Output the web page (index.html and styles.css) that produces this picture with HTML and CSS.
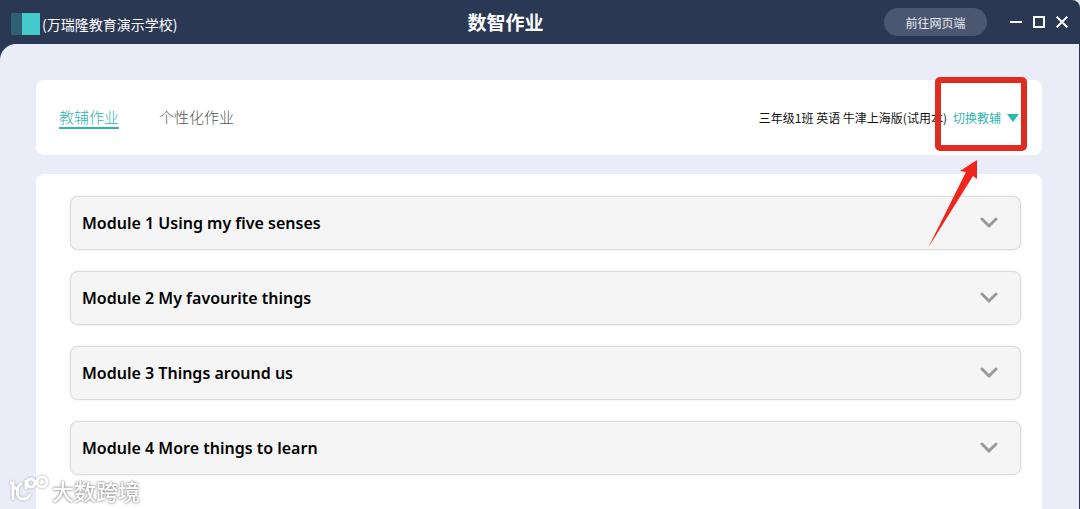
FILE: index.html
```html
<!DOCTYPE html>
<html lang="zh-CN">

<head>
    <meta charset="UTF-8">
    <meta name="viewport" content="width=device-width, initial-scale=1.0">
    <title>数智作业</title>
    <link rel="stylesheet" href="styles.css">
</head>

<body>
    <div class="window">
        <header class="titlebar">
            <div class="school">
                <svg class="logo" width="29" height="22" viewBox="0 0 29 22">
                    <rect width="12" height="22" fill="#2d6173" />
                    <rect x="11" width="18" height="22" fill="#45cacc" />
                </svg>
                <span>(万瑞隆教育演示学校)</span>
            </div>
            <h1>数智作业</h1>
            <div class="controls">
                <button class="webbtn">前往网页端</button>
                <button class="winbtn" aria-label="最小化">
                    <svg width="12" height="12" viewBox="0 0 12 12"><path d="M0 6H12" /></svg>
                </button>
                <button class="winbtn" aria-label="最大化">
                    <svg width="12" height="12" viewBox="0 0 12 12"><path d="M1 1H11V11H1Z" /></svg>
                </button>
                <button class="winbtn" aria-label="关闭">
                    <svg width="12" height="12" viewBox="0 0 12 12"><path d="M.7 .7L11.3 11.3M11.3 .7L.7 11.3" /></svg>
                </button>
            </div>
        </header>

        <main class="content">
            <div class="card toolbar">
                <nav class="tabs">
                    <a href="#" class="active">教辅作业</a>
                    <a href="#">个性化作业</a>
                </nav>
                <div class="book">
                    <span>三年级1班 英语 牛津上海版(试用本)</span>
                    <button class="switch">切换教辅
                        <svg width="12" height="8" viewBox="0 0 12 8"><path d="M0 0H12L6 8Z" fill="#2fb5b0" /></svg>
                    </button>
                </div>
                <!-- highlight box and arrow -->
                <svg class="mark" width="100" height="174" viewBox="0 0 100 174">
                    <rect x="11" y="3" width="86" height="68" rx="2" fill="none" stroke="#e02b20" stroke-width="6" />
                    <path d="M50 83L33 94L39 95L1 171L46 99L50 102Z" fill="#f0241b" />
                </svg>
            </div>

            <div class="card modules">
                <button class="module">Module 1 Using my five senses
                    <svg width="18" height="12" viewBox="0 0 18 12"><path d="M2 2L9 9L16 2" /></svg>
                </button>
                <button class="module">Module 2 My favourite things
                    <svg width="18" height="12" viewBox="0 0 18 12"><path d="M2 2L9 9L16 2" /></svg>
                </button>
                <button class="module">Module 3 Things around us
                    <svg width="18" height="12" viewBox="0 0 18 12"><path d="M2 2L9 9L16 2" /></svg>
                </button>
                <button class="module">Module 4 More things to learn
                    <svg width="18" height="12" viewBox="0 0 18 12"><path d="M2 2L9 9L16 2" /></svg>
                </button>
            </div>
        </main>
    </div>

    <div class="watermark">
        <svg width="42" height="30" viewBox="0 0 42 30">
            <path d="M2 8H5V25M5 15L8 12M14 8C8 11 7 24 15 24C19 24 21 22 22 19" />
            <path d="M18 5V14" />
            <circle cx="23" cy="8" r="4" />
            <circle cx="34" cy="7" r="5" />
        </svg>
        <span>大数跨境</span>
    </div>
</body>

</html>
```
FILE: styles.css
```css
* {
    box-sizing: border-box;
}

html {
    height: 100%;
    overflow: hidden;
    background-color: #e4e8ee;
}

body {
    margin: 0;
    height: 100%;
    font-family: "Noto Sans CJK SC", sans-serif;
}

button {
    font-family: inherit;
    border: none;
    background: none;
    padding: 0;
    cursor: pointer;
}

.window {
    display: flex;
    flex-direction: column;
    min-height: 100%;
    background-color: #2b3854;
    border-top-right-radius: 8px;
    padding-right: 1px;
}

.titlebar {
    display: grid;
    grid-template-columns: 1fr auto 1fr;
    align-items: center;
    height: 44px;
    padding: 0 11px;
    color: white;
}

.titlebar h1 {
    margin: 0;
    font-size: 19px;
    line-height: 44px;
    padding-right: 68px;
}

.school {
    display: flex;
    align-items: center;
    gap: 2px;
    font-size: 14px;
    padding-top: 4px;
}

.controls {
    display: flex;
    align-items: center;
    justify-content: flex-end;
    gap: 11px;
}

.webbtn {
    width: 103px;
    height: 28px;
    border-radius: 14px;
    background-color: #4b5670;
    color: #e9edf5;
    font-size: 12px;
    margin-right: 12px;
}

.winbtn {
    display: flex;
}

.winbtn path {
    fill: none;
    stroke: white;
    stroke-width: 2;
}

.content {
    flex: 1;
    display: flex;
    flex-direction: column;
    gap: 19px;
    padding: 36px 37px 0 36px;
    background-color: #eaecf8;
    border-top-left-radius: 16px;
}

.card {
    background-color: white;
    border-radius: 8px;
}

.toolbar {
    position: relative;
    display: flex;
    justify-content: space-between;
    align-items: center;
    height: 75px;
    padding: 0 23px;
}

.tabs {
    display: flex;
    gap: 40px;
}

.tabs a {
    font-size: 15px;
    line-height: 20px;
    font-weight: 300;
    color: #555;
    text-decoration: none;
    border-bottom: 2px solid transparent;
}

.tabs .active {
    color: #2fb5b0;
    border-color: #2fb5b0;
}

.book {
    display: flex;
    align-items: center;
    gap: 6px;
    font-size: 12px;
    color: #111;
}

.switch {
    display: flex;
    align-items: center;
    gap: 6px;
    font-size: 12px;
    color: #2fb5b0;
}

.mark {
    position: absolute;
    top: -3px;
    right: 15px;
    pointer-events: none;
}

.modules {
    flex: 1;
    display: flex;
    flex-direction: column;
    gap: 21px;
    padding: 22px 21px 35px 34px;
    border-radius: 8px 8px 0 0;
}

.module {
    display: flex;
    align-items: center;
    justify-content: space-between;
    height: 54px;
    padding: 0 22px 0 11px;
    border: 1px solid #dcdcdc;
    border-radius: 8px;
    background-color: #f5f5f5;
    box-shadow: 0 0 2px #ddd;
    font-family: "Noto Sans", "Open Sans", sans-serif;
    font-size: 16px;
    font-weight: 600;
    color: black;
}

.module path {
    fill: none;
    stroke: #999;
    stroke-width: 3;
    stroke-linecap: round;
}

.watermark {
    position: fixed;
    left: 8px;
    bottom: 3px;
    display: flex;
    align-items: center;
    gap: 2px;
    font-size: 22px;
    font-weight: 500;
    line-height: 32px;
    color: white;
    text-shadow: 0 0 2px #888, 0 0 3px #999;
}

.watermark svg {
    fill: none;
    stroke: white;
    stroke-width: 3;
    overflow: visible;
    filter: drop-shadow(0 0 1px #999);
}
```
